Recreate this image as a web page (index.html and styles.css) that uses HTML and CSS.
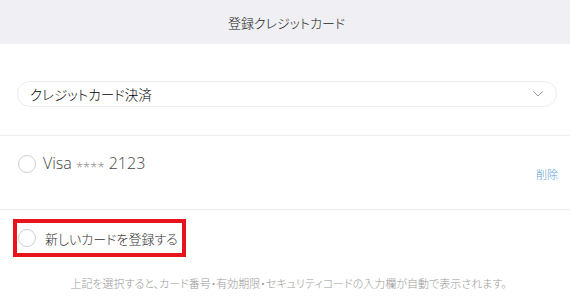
FILE: index.html
```html
<!DOCTYPE html>
<html lang="ja">
<head>
  <meta charset="UTF-8">
  <meta name="viewport" content="width=device-width, initial-scale=1.0">
  <title>登録クレジットカード</title>
  <link rel="stylesheet" href="styles.css">
</head>
<body>
  <header class="header">
    <h1>登録クレジットカード</h1>
  </header>

  <section class="method">
    <div class="select">
      <span>クレジットカード決済</span>
      <svg class="chevron" width="10" height="6" viewBox="0 0 10 6">
        <polyline points="0.5,0.5 5,5 9.5,0.5" fill="none" stroke="#999" stroke-width="1"/>
      </svg>
    </div>
  </section>

  <section class="card-row">
    <label class="option">
      <span class="radio"></span>
      <span class="card-name">Visa <span class="mask">****</span> 2123</span>
    </label>
    <a class="delete" href="#">削除</a>
  </section>

  <section class="new-card">
    <div class="highlight">
      <label class="option">
        <span class="radio"></span>
        <span class="new-label">新しいカードを登録する</span>
      </label>
    </div>
    <p class="note">上記を選択すると、カード番号・有効期限・セキュリティコードの入力欄が自動で表示されます。</p>
  </section>
</body>
</html>
```

FILE: styles.css
```css
* {
  margin: 0;
  padding: 0;
  box-sizing: border-box;
}

body {
  font-family: "Open Sans", "Noto Sans CJK JP", sans-serif;
  font-weight: 300;
  font-feature-settings: "palt";
  background: #fff;
  color: #333;
  width: 570px;
}

.header {
  height: 44px;
  background: #efeff4;
  display: flex;
  align-items: center;
  justify-content: center;
}

.header h1 {
  font-size: 13px;
  font-weight: 300;
  color: #222;
  padding-left: 3px;
}

.method {
  padding: 37px 13px 28px 17px;
  border-bottom: 1px solid #ececec;
}

.select {
  height: 26px;
  border: 1px solid #ececec;
  border-radius: 13px;
  display: flex;
  align-items: center;
  justify-content: space-between;
  padding: 0 13px 0 12px;
  font-size: 13.5px;
  color: #000;
}

.chevron {
  display: block;
}

.card-row {
  height: 74px;
  display: flex;
  justify-content: space-between;
  padding: 19px 12px 0 18px;
  border-bottom: 1px solid #ececec;
}

.option {
  display: flex;
  align-items: center;
  gap: 9px;
  height: 18px;
}

.radio {
  width: 18px;
  height: 18px;
  border: 1px solid #cfcfcf;
  border-radius: 50%;
  background: #fff;
}

.card-name {
  font-size: 16px;
  color: #444;
  margin-left: -2px;
}

.mask {
  font-size: 13px;
  color: #888;
  vertical-align: -3px;
}

.delete {
  font-size: 11px;
  color: #5b9bd5;
  text-decoration: none;
  margin-top: 11px;
  height: 14px;
}

.new-card {
  padding: 9px 0 0 13px;
}

.highlight {
  display: inline-block;
  border: 4px solid #e8141c;
  padding: 6px 4px 6px 1px;
}

.new-label {
  font-size: 13px;
  color: #333;
}

.note {
  margin: 18px 6px 0 0;
  text-align: center;
  font-size: 11px;
  color: #999;
}
```
